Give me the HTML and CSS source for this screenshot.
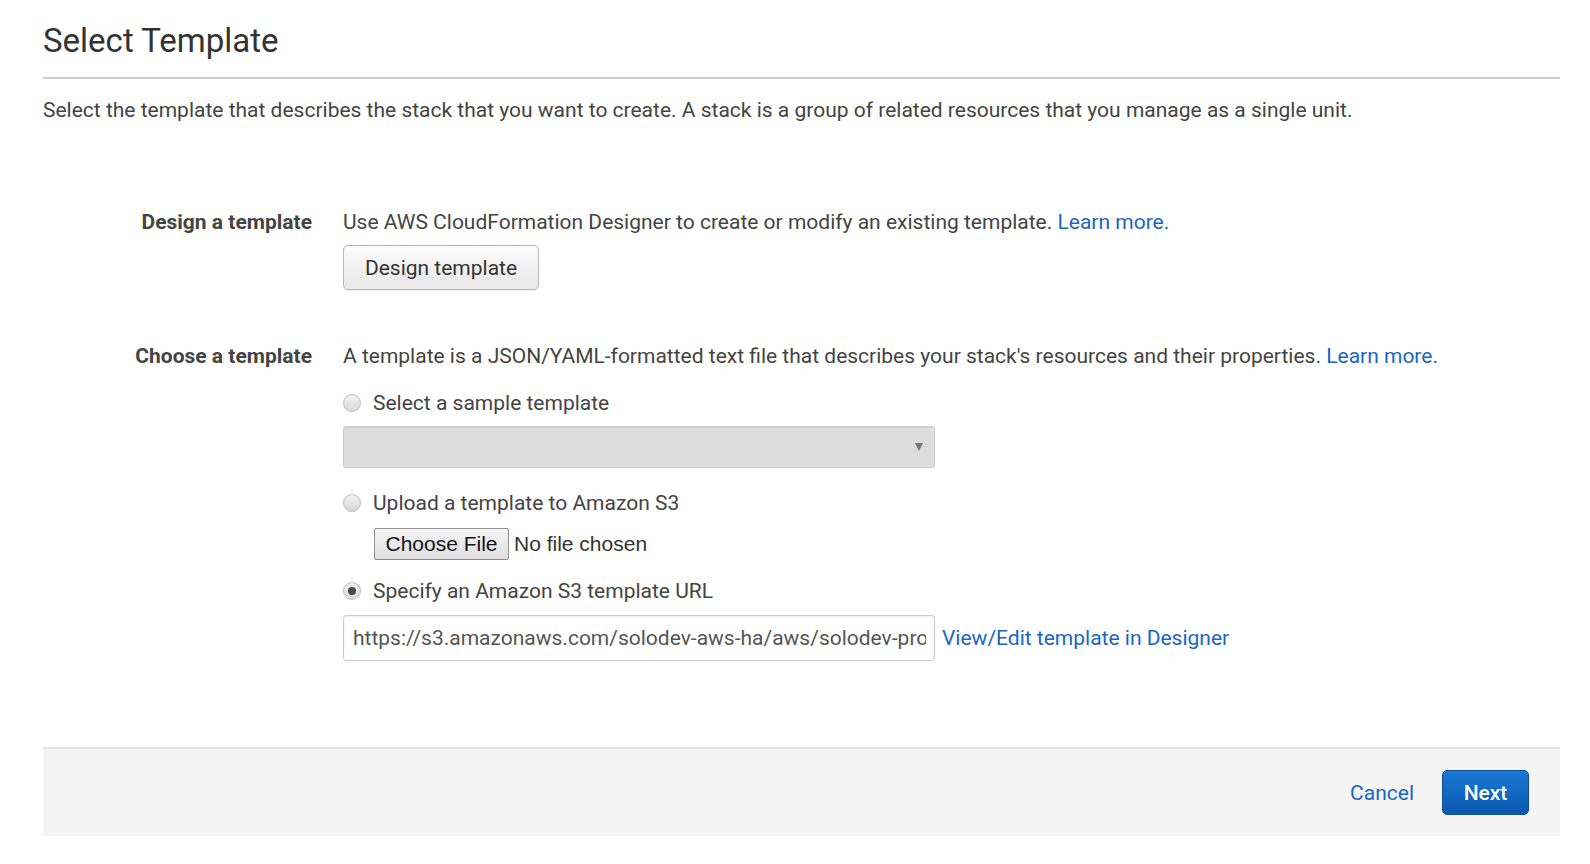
FILE: index.html
```html
<!DOCTYPE html>
<html>
<head>
<meta charset="utf-8">
<title>Select Template</title>
<link rel="stylesheet" href="styles.css">
</head>
<body>
<div class="page">
  <h1 class="title">Select Template</h1>
  <p class="intro">Select the template that describes the stack that you want to create. A stack is a group of related resources that you manage as a single unit.</p>

  <div class="form">
    <div class="row row-design">
      <div class="label">Design a template</div>
      <div class="content">
        <div class="text">Use AWS CloudFormation Designer to create or modify an existing template. <a class="link" href="#">Learn more.</a></div>
        <button class="btn-design" type="button">Design template</button>
      </div>
    </div>

    <div class="row row-choose">
      <div class="label">Choose a template</div>
      <div class="content">
        <div class="text">A template is a JSON/YAML-formatted text file that describes your stack's resources and their properties. <a class="link" href="#">Learn more.</a></div>

        <label class="radio-line opt-first"><span class="radio"></span>Select a sample template</label>
        <div class="select-wrap">
          <div class="select"></div>
        </div>

        <label class="radio-line opt-next"><span class="radio"></span>Upload a template to Amazon S3</label>
        <div class="file-row">
          <span class="file-btn">Choose File</span><span class="file-name">No file chosen</span>
        </div>

        <label class="radio-line opt-last"><span class="radio checked"></span>Specify an Amazon S3 template URL</label>
        <div class="url-row">
          <input class="url-input" type="text" readonly value="https://s3.amazonaws.com/solodev-aws-ha/aws/solodev-production-stack.yaml">
          <a class="link view-link" href="#">View/Edit template in Designer</a>
        </div>
      </div>
    </div>
  </div>

  <div class="footer">
    <a class="cancel" href="#">Cancel</a>
    <button class="btn-next" type="button">Next</button>
  </div>
</div>
</body>
</html>
```

FILE: styles.css
```css
* { box-sizing: border-box; }

html, body {
  margin: 0;
  padding: 0;
  background: #ffffff;
}

body {
  font-family: Roboto, "Liberation Sans", Arial, sans-serif;
  color: #444444;
  font-size: 21px;
}

.page {
  padding: 20px 30px 0 43px;
}

.title {
  margin: 0;
  font-size: 33px;
  line-height: 42px;
  font-weight: 400;
  color: #333333;
  padding-bottom: 15px;
  border-bottom: 2px solid #cccccc;
}

.intro {
  margin: 18px 0 0 0;
  line-height: 26px;
  font-size: 21px;
  color: #444444;
}

.form {
  margin-top: 86px;
}

.row {
  display: grid;
  grid-template-columns: 269px 1fr;
  column-gap: 31px;
}

.row-choose {
  margin-top: 53px;
}

.label {
  text-align: right;
  font-weight: 700;
  line-height: 26px;
  color: #444444;
}

.content {
  display: flex;
  flex-direction: column;
  align-items: flex-start;
}

.text {
  line-height: 26px;
}

.link {
  color: #1a66c4;
  text-decoration: none;
}

.btn-design {
  margin-top: 10px;
  width: 196px;
  height: 45px;
  font-family: Roboto, "Liberation Sans", Arial, sans-serif;
  font-size: 21px;
  color: #333333;
  background: linear-gradient(#fbfbfb, #e8e8e8);
  border: 1px solid #b8b8b8;
  border-radius: 5px;
  box-shadow: 0 1px 1px rgba(0,0,0,0.08);
  padding: 0;
}

.radio-line {
  display: flex;
  align-items: center;
  line-height: 26px;
  font-size: 21px;
  color: #444444;
}

.opt-first { margin-top: 21px; }
.opt-next { margin-top: 22px; }
.opt-last { margin-top: 18px; }

.radio {
  width: 18px;
  height: 18px;
  border-radius: 50%;
  border: 1px solid #bdbdbd;
  background: linear-gradient(#f2f2f2, #d9d9d9);
  margin-right: 12px;
  display: flex;
  align-items: center;
  justify-content: center;
}

.radio.checked::before {
  content: "";
  width: 8px;
  height: 8px;
  border-radius: 50%;
  background: #4a4a4a;
}

.select-wrap {
  position: relative;
  margin-top: 10px;
}

.select {
  width: 592px;
  height: 42px;
  background: #dddddd;
  border: 1px solid #cccccc;
  border-radius: 3px;
  box-shadow: inset 0 1px 1px rgba(0,0,0,0.06);
}

.select-wrap::after {
  content: "";
  position: absolute;
  right: 12px;
  top: 17px;
  border-left: 4px solid transparent;
  border-right: 4px solid transparent;
  border-top: 8px solid #777777;
}

.file-row {
  margin-top: 12px;
  margin-left: 31px;
  display: flex;
  align-items: center;
  font-family: "Liberation Sans", Arial, sans-serif;
  font-size: 21px;
  color: #333333;
}

.file-btn {
  height: 32px;
  width: 135px;
  display: flex;
  align-items: center;
  justify-content: center;
  background: linear-gradient(#f6f6f6, #dedede);
  border: 1px solid #8f8f8f;
  border-radius: 2px;
  color: #111111;
}

.file-name {
  margin-left: 5px;
}

.url-row {
  margin-top: 11px;
  display: flex;
  align-items: center;
}

.url-input {
  width: 592px;
  height: 46px;
  border: 1px solid #cccccc;
  border-radius: 3px;
  box-shadow: inset 0 1px 2px rgba(0,0,0,0.08);
  padding: 0 8px 0 9px;
  font-family: Roboto, "Liberation Sans", Arial, sans-serif;
  font-size: 21px;
  color: #555555;
  background: #ffffff;
  outline: none;
  margin: 0;
}

.view-link {
  margin-left: 7px;
  font-size: 21px;
  line-height: 26px;
  margin-top: -1px;
}

.footer {
  margin-top: 86px;
  width: 1517px;
  height: 89px;
  background: #f4f4f4;
  border-top: 2px solid #e3e3e3;
  display: flex;
  justify-content: flex-end;
  align-items: center;
  padding: 0 31px 0 0;
}

.cancel {
  color: #1a66c4;
  text-decoration: none;
  font-size: 21px;
  margin-right: 28px;
}

.btn-next {
  width: 87px;
  height: 45px;
  border-radius: 5px;
  border: 1px solid #0b4f9e;
  background: linear-gradient(#1a78d6, #0a58ae);
  color: #ffffff;
  font-family: Roboto, "Liberation Sans", Arial, sans-serif;
  font-size: 21px;
  font-weight: 500;
  padding: 0;
}
```
